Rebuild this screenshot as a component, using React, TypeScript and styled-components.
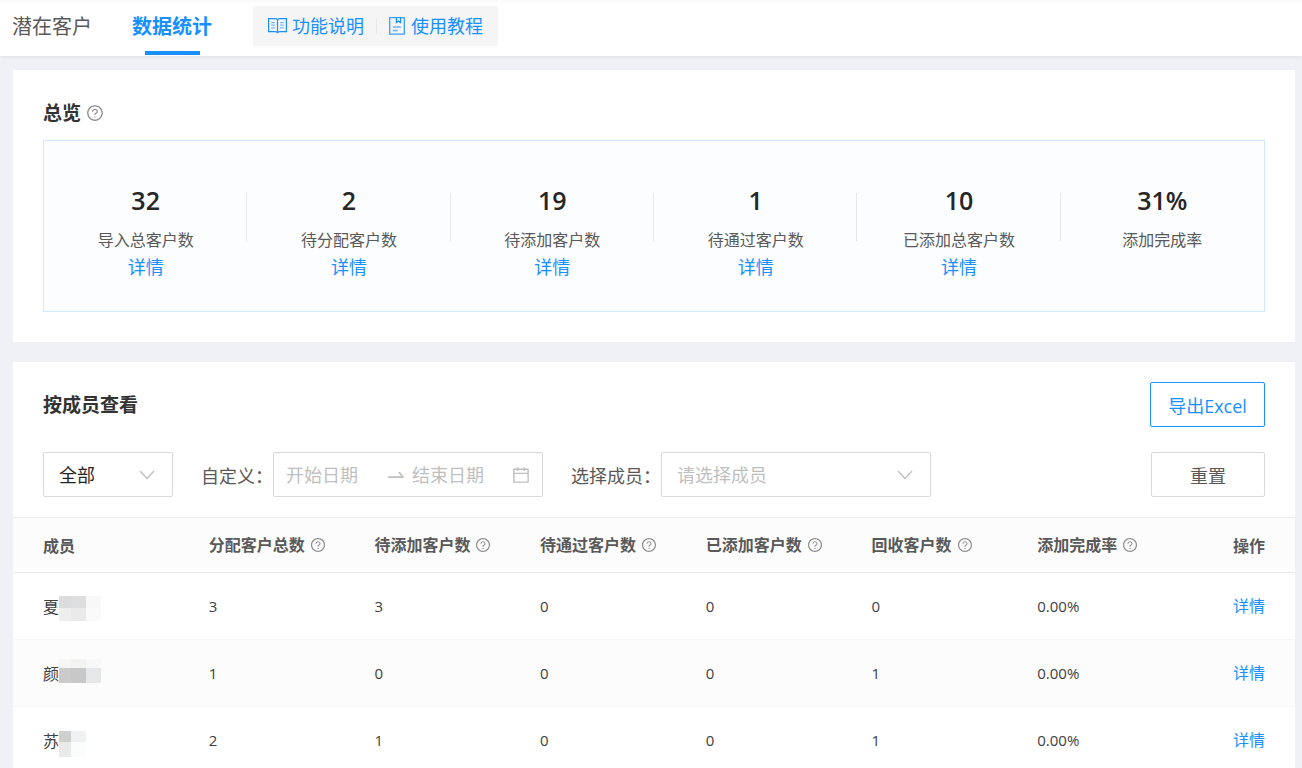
import React from "react";
import styled, { createGlobalStyle } from "styled-components";
import {
  AiOutlineQuestionCircle,
  AiOutlineCalendar,
  AiOutlineSwapRight,
} from "react-icons/ai";

const GlobalStyle = createGlobalStyle`
  *, *::before, *::after { box-sizing: border-box; }
  body {
    margin: 0;
    background: #f0f1f6;
    color: #595959;
    font-family: "Open Sans", "Noto Sans CJK SC", sans-serif;
    font-size: 18px;
  }
  button, input, select { font: inherit; }
`;

const Page = styled.div`
  height: 100vh;
  overflow: hidden;
`;

const TopBar = styled.header`
  display: flex;
  align-items: flex-start;
  height: 56px;
  padding-left: 12px;
  background: linear-gradient(#fafafa, #fff 4px);
  box-shadow: 0 1px 4px rgba(0, 21, 41, 0.08);
`;

const Tabs = styled.nav`
  display: flex;
  gap: 40px;
  margin-right: 41px;
`;

const Tab = styled.a<{ $active?: boolean }>`
  display: flex;
  flex-direction: column;
  align-items: center;
  justify-content: space-between;
  height: 55px;
  padding-top: 2px;
  color: ${(p) => (p.$active ? "#1890ff" : "#595959")};
  font-size: 20px;
  font-weight: ${(p) => (p.$active ? 700 : 400)};
  line-height: 49px;
  text-decoration: none;

  &::after {
    content: "";
    width: 55px;
    height: 4px;
    background: ${(p) => (p.$active ? "#1890ff" : "transparent")};
  }
`;

const HelpLinks = styled.div`
  display: flex;
  align-items: center;
  height: 40px;
  margin-top: 6px;
  padding: 0 3px;
  border-radius: 2px;
  background: #f5f5f5;
`;

const HelpLink = styled.a`
  display: flex;
  align-items: center;
  gap: 4px;
  padding: 0 12px;
  color: #1890ff;
  line-height: 24px;
  text-decoration: none;
`;

const HelpDivider = styled.span`
  width: 1px;
  height: 16px;
  background: #e8e8e8;
`;

const Content = styled.main`
  display: flex;
  flex-direction: column;
  gap: 20px;
  padding: 14px 7px 0 13px;
`;

const Card = styled.section`
  background: #fff;
`;

const OverviewCard = styled(Card)`
  padding: 30px;
`;

const Title = styled.h2`
  display: flex;
  align-items: center;
  gap: 5px;
  margin: 0;
  color: #333;
  font-size: 19px;
  font-weight: 700;
  line-height: 26px;
`;

const HelpIcon = styled(AiOutlineQuestionCircle)`
  flex: none;
  color: #8c8c8c;
`;

const StatGrid = styled.div`
  display: grid;
  grid-template-columns: repeat(6, 1fr);
  margin-top: 14px;
  padding: 39px 0 31px;
  border: 1px solid #d1e9ff;
  background: #fbfdff;
`;

const Stat = styled.div`
  display: flex;
  flex-direction: column;
  align-items: center;
  height: 100px;

  &:not(:last-child) {
    background: linear-gradient(#e8e8e8, #e8e8e8) right 0 top 13px / 1px 48px no-repeat;
  }
`;

const StatValue = styled.strong`
  color: #262626;
  font-size: 25px;
  font-weight: 600;
  line-height: 40px;
`;

const StatLabel = styled.span`
  margin-top: 8px;
  font-size: 16px;
  line-height: 24px;
`;

const DetailLink = styled.a`
  color: #1890ff;
  line-height: 30px;
  text-decoration: none;
`;

const SectionHead = styled.div`
  display: flex;
  align-items: center;
  justify-content: space-between;
  padding: 20px 30px 0;
`;

const Button = styled.button<{ $primary?: boolean }>`
  height: 45px;
  padding: 0;
  width: ${(p) => (p.$primary ? 115 : 114)}px;
  border: 1px solid ${(p) => (p.$primary ? "#1890ff" : "#d9d9d9")};
  border-radius: 2px;
  background: #fff;
  color: ${(p) => (p.$primary ? "#1890ff" : "#595959")};
`;

const Filters = styled.form`
  display: flex;
  align-items: center;
  padding: 25px 30px 20px;
`;

const Field = styled.div`
  display: flex;
  align-items: center;
  margin-right: 28px;
`;

const Label = styled.label`
  white-space: nowrap;
`;

const SelectBox = styled.div<{ $width: number }>`
  display: grid;
  grid-template-columns: 1fr auto;
  align-items: center;
  width: ${(p) => p.$width}px;

  svg {
    grid-area: 1 / 2;
    margin-right: 18px;
    pointer-events: none;
  }
`;

const Select = styled.select<{ $muted?: boolean }>`
  grid-area: 1 / 1 / 2 / 3;
  appearance: none;
  width: 100%;
  height: 45px;
  padding: 0 15px;
  border: 1px solid #d9d9d9;
  border-radius: 2px;
  background: #fff;
  color: ${(p) => (p.$muted ? "#bfbfbf" : "#262626")};
`;

const DateRange = styled.div`
  display: flex;
  align-items: center;
  width: 270px;
  height: 45px;
  padding: 0 11px 0 12px;
  border: 1px solid #d9d9d9;
  border-radius: 2px;
  color: #bfbfbf;
`;

const DateInput = styled.input`
  flex: 1;
  min-width: 0;
  padding: 0;
  border: 0;
  background: none;
  color: #262626;

  &::placeholder {
    color: #bfbfbf;
  }
`;

const RangeArrow = styled(AiOutlineSwapRight)`
  flex: none;
  margin-right: 5px;
`;

const Spacer = styled.div`
  flex: 1;
`;

const Table = styled.table`
  width: 100%;
  border-collapse: separate;
  border-spacing: 0;
  table-layout: fixed;
  font-size: 16px;
`;

const HeadCell = styled.th`
  height: 56px;
  padding: 0 0 0 30px;
  border-top: 1px solid #ebebeb;
  border-bottom: 1px solid #ebebeb;
  background: #fcfcfc;
  font-weight: 600;
  text-align: left;
  white-space: nowrap;

  &:last-child {
    width: 122px;
    padding: 0 30px 0 0;
    text-align: right;
  }
`;

const HeadLabel = styled.span`
  display: inline-flex;
  align-items: center;
  gap: 5px;
  line-height: 24px;
`;

const Row = styled.tr`
  &:nth-child(even) {
    background: #fcfcfc;
  }
`;

const Cell = styled.td`
  height: 67px;
  padding: 0 0 0 30px;
  border-bottom: 1px solid #f5f5f5;
  color: #404040;
  font-size: 15px;

  &:last-child {
    padding: 0 30px 0 0;
    font-size: 16px;
    text-align: right;
  }
`;

const MemberName = styled.span`
  display: flex;
  align-items: center;
  font-size: 16px;
`;

const Mosaic = styled.span<{ $cols: string; $rows: string; $shift: number }>`
  display: grid;
  grid-template-columns: ${(p) => p.$cols};
  grid-template-rows: ${(p) => p.$rows};
  margin-top: ${(p) => Math.max(p.$shift, 0)}px;
  margin-bottom: ${(p) => Math.max(-p.$shift, 0)}px;
`;

const Tile = styled.span<{ $color: string }>`
  background: ${(p) => p.$color};
`;

const Chevron = () => (
  <svg width="16" height="10" viewBox="0 0 16 10" fill="none" stroke="#bfbfbf" strokeWidth="1.4" aria-hidden="true">
    <path d="M1 1l7 7.4L15 1" />
  </svg>
);

const BookIcon = () => (
  <svg width="20" height="18" viewBox="0 0 20 18" fill="none" stroke="#1890ff" strokeWidth="1.2" aria-hidden="true">
    <path d="M9.5 2.6C8.8 1.9 8 1.6 7 1.6H.6v13H7c1 0 1.800.3 2.500 1 .7-.7 1.500-1 2.500-1h6.400v-13H12c-1 0-1.800.3-2.500 1zM9.500 2.600v13" />
    <path strokeOpacity="0.6" d="M3.200 5.600h3.600M3.200 8.200h3.600M3.200 10.800h3.600M12.200 5.600h3.600M12.200 8.200h3.600M12.200 10.800h3.600" />
  </svg>
);

const GuideIcon = () => (
  <svg width="18" height="20" viewBox="0 0 18 20" fill="none" stroke="#1890ff" strokeWidth="1.3" aria-hidden="true">
    <path strokeOpacity="0.85" d="M.7 1.600h14.600v16.600H.700z" />
    <path d="M7.400 1.600v5l2.100-1.500 2.100 1.500v-5" />
    <path strokeOpacity="0.65" d="M3.800 11h8M3.800 14.500h5" />
  </svg>
);

const stats = [
  { value: "32", label: "导入总客户数", link: true },
  { value: "2", label: "待分配客户数", link: true },
  { value: "19", label: "待添加客户数", link: true },
  { value: "1", label: "待通过客户数", link: true },
  { value: "10", label: "已添加总客户数", link: true },
  { value: "31%", label: "添加完成率", link: false },
];

const columns = [
  "分配客户总数",
  "待添加客户数",
  "待通过客户数",
  "已添加客户数",
  "回收客户数",
  "添加完成率",
];

const members = [
  {
    name: "夏",
    values: ["3", "3", "0", "0", "0", "0.00%"],
    cols: "12px 15px 15px",
    rows: "12px 13px",
    shift: 4,
    tiles: ["#dbdcde", "#dedede", "#f8f8f8", "#eeeeee", "#eaeaea", "#fafafa"],
  },
  {
    name: "颜",
    values: ["1", "0", "0", "0", "1", "0.00%"],
    cols: "12px 15px 15px",
    rows: "9px 15px",
    shift: -4,
    tiles: ["#f6f6f6", "#f3f3f1", "#f8f8f8", "#cbcbcb", "#c8c8c8", "#e5e7e9"],
  },
  {
    name: "苏",
    values: ["2", "1", "0", "0", "1", "0.00%"],
    cols: "12px 15px",
    rows: "11px 15px",
    shift: 8,
    tiles: ["#cfcfcd", "#f0f1f3", "#eaeaea", "#fafdfc"],
  },
];

export default function App() {
  return (
    <Page>
      <GlobalStyle />
      <TopBar>
        <Tabs>
          <Tab href="#leads">潜在客户</Tab>
          <Tab href="#stats" $active aria-current="page">
            数据统计
          </Tab>
        </Tabs>
        <HelpLinks>
          <HelpLink href="#features">
            <BookIcon />
            功能说明
          </HelpLink>
          <HelpDivider />
          <HelpLink href="#guide">
            <GuideIcon />
            使用教程
          </HelpLink>
        </HelpLinks>
      </TopBar>

      <Content>
        <OverviewCard>
          <Title>
            总览
            <HelpIcon size={18} />
          </Title>
          <StatGrid>
            {stats.map((s) => (
              <Stat key={s.label}>
                <StatValue>{s.value}</StatValue>
                <StatLabel>{s.label}</StatLabel>
                {s.link && <DetailLink href="#detail">详情</DetailLink>}
              </Stat>
            ))}
          </StatGrid>
        </OverviewCard>

        <Card>
          <SectionHead>
            <Title>按成员查看</Title>
            <Button type="button" $primary>
              导出Excel
            </Button>
          </SectionHead>
          <Filters>
            <Field>
              <SelectBox $width={130}>
                <Select aria-label="范围" defaultValue="all">
                  <option value="all">全部</option>
                </Select>
                <Chevron />
              </SelectBox>
            </Field>
            <Field>
              <Label htmlFor="start-date">自定义：</Label>
              <DateRange>
                <DateInput id="start-date" type="text" placeholder="开始日期" />
                <RangeArrow size={22} />
                <DateInput type="text" placeholder="结束日期" aria-label="结束日期" />
                <AiOutlineCalendar size={20} />
              </DateRange>
            </Field>
            <Field>
              <Label htmlFor="member">选择成员：</Label>
              <SelectBox $width={270}>
                <Select id="member" $muted defaultValue="">
                  <option value="">请选择成员</option>
                </Select>
                <Chevron />
              </SelectBox>
            </Field>
            <Spacer />
            <Button type="reset">重置</Button>
          </Filters>

          <Table>
            <thead>
              <tr>
                <HeadCell>成员</HeadCell>
                {columns.map((c) => (
                  <HeadCell key={c}>
                    <HeadLabel>
                      {c}
                      <HelpIcon size={16} />
                    </HeadLabel>
                  </HeadCell>
                ))}
                <HeadCell>操作</HeadCell>
              </tr>
            </thead>
            <tbody>
              {members.map((m) => (
                <Row key={m.name}>
                  <Cell>
                    <MemberName>
                      {m.name}
                      <Mosaic $cols={m.cols} $rows={m.rows} $shift={m.shift}>
                        {m.tiles.map((t, i) => (
                          <Tile key={i} $color={t} />
                        ))}
                      </Mosaic>
                    </MemberName>
                  </Cell>
                  {m.values.map((v, i) => (
                    <Cell key={i}>{v}</Cell>
                  ))}
                  <Cell>
                    <DetailLink href="#detail">详情</DetailLink>
                  </Cell>
                </Row>
              ))}
            </tbody>
          </Table>
        </Card>
      </Content>
    </Page>
  );
}
